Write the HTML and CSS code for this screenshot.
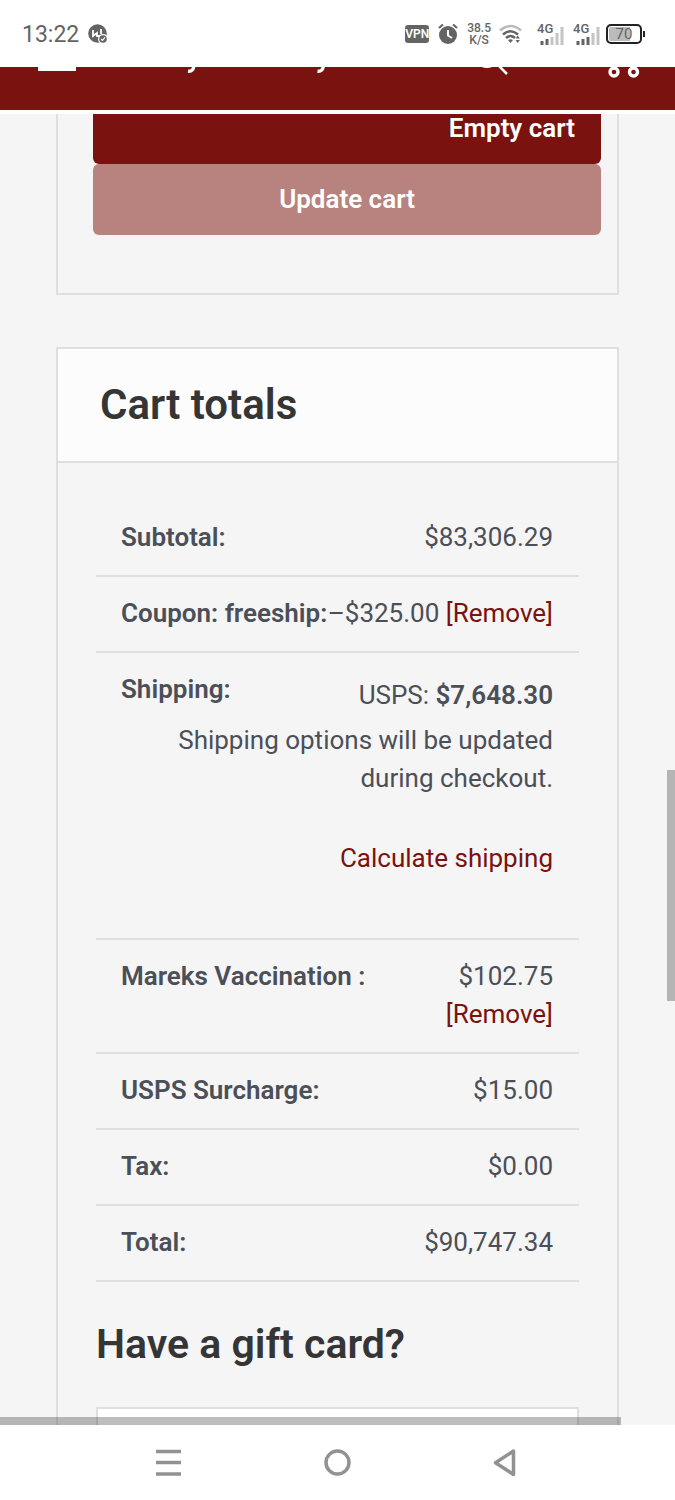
FILE: index.html
```html
<!DOCTYPE html>
<html lang="en">
<head>
<meta charset="utf-8">
<meta name="viewport" content="width=device-width, initial-scale=1">
<title>Cart</title>
<link rel="stylesheet" href="styles.css">
</head>
<body>
<div class="screen">
  <div class="status">
    <div class="status-left">
      <span class="clock">13:22</span>
      <svg width="20" height="20" viewBox="0 0 20 20" aria-hidden="true">
        <circle cx="9.500" cy="9.500" r="9.300" fill="#646464"/>
        <path d="M5 6v6l4-3v3h4M13 5v5" fill="none" stroke="#fff" stroke-width="1.800"/>
        <circle cx="15" cy="15" r="5" fill="#fff"/>
        <circle cx="15" cy="15" r="3.800" fill="#646464"/>
        <path d="M13 15l1.500 1.400 2.500-3" fill="none" stroke="#fff" stroke-width="1.200"/>
      </svg>
    </div>
    <div class="status-right">
      <span class="vpn">VPN</span>
      <svg class="alarm" width="20" height="22" viewBox="0 0 20 22" aria-hidden="true">
        <circle cx="10" cy="12" r="9" fill="#646464"/>
        <path d="M1 5l4-3.500M19 5l-4-3.500" stroke="#646464" stroke-width="2.200" fill="none"/>
        <path d="M10 7v5.500l4 2.500" stroke="#fff" stroke-width="2" fill="none"/>
      </svg>
      <span class="speed">38.5<br>K/S</span>
      <svg class="wifi" width="24" height="20" viewBox="0 0 24 20" aria-hidden="true">
        <g fill="none" stroke-width="2.600">
          <path d="M1 6.500Q11.500-2.500 22 6.500" stroke="#bbb"/>
          <path d="M4 10.500q7.500-6.500 15 0M7 14q4.500-4 9 0" stroke="#646464"/>
        </g>
        <path d="M9 16q2.500-1.500 5 0l-2.500 3zM16.500 14.500l2.200-3 2.200 3zM16.500 16l2.200 3 2.200-3z" fill="#646464"/>
      </svg>
      <div class="signal">
        <span>4G</span>
        <svg width="24" height="19" viewBox="0 0 24 19" aria-hidden="true">
          <path d="M2 19v-4M7 19v-6" stroke="#646464" stroke-width="3"/>
          <path d="M12 19v-8M17 19V7M22 19V1" stroke="#c4c4c4" stroke-width="3"/>
        </svg>
      </div>
      <div class="signal">
        <span>4G</span>
        <svg width="24" height="19" viewBox="0 0 24 19" aria-hidden="true">
          <path d="M2 19v-4M7 19v-6M12 19v-8" stroke="#646464" stroke-width="3"/>
          <path d="M17 19V7M22 19V1" stroke="#c4c4c4" stroke-width="3"/>
        </svg>
      </div>
      <div class="battery"><span>70</span></div>
    </div>
  </div>

  <header class="site-header">
    <button class="menu" type="button" aria-label="Menu"></button>
    <svg class="brand" width="140" height="8" viewBox="0 0 140 8" aria-hidden="true">
      <path d="M7-2C6.500 3 4.500 4.600 1 4.200M136.500-2C136 3 134 4.600 130.500 4.200" fill="none" stroke="#fff" stroke-width="3.400"/>
    </svg>
    <button class="icon-btn search" type="button" aria-label="Search">
      <svg width="30" height="10" viewBox="0 0 30 10">
        <ellipse cx="8" cy="-5" rx="8" ry="5" fill="none" stroke="#fff" stroke-width="2"/>
        <path d="M20-1l8 8" stroke="#fff" stroke-width="2.500"/>
      </svg>
    </button>
    <button class="icon-btn" type="button" aria-label="Cart">
      <svg width="32" height="12" viewBox="0 0 32 12">
        <g fill="none" stroke="#fff" stroke-width="3.400"><circle cx="6" cy="5" r="4"/><circle cx="25.500" cy="5" r="4"/></g>
      </svg>
    </button>
  </header>

  <main class="page">
    <section class="card items">
      <button class="btn empty" type="button">Empty cart</button>
      <button class="btn update" type="button" disabled>Update cart</button>
    </section>

    <section class="card totals">
      <h2 class="card-title">Cart totals</h2>
      <div class="card-body">
        <table class="sums">
          <tbody>
            <tr><th scope="row">Subtotal:</th><td>$83,306.29</td></tr>
            <tr class="coupon"><th scope="row">Coupon: freeship:</th><td>–$325.00 <a href="#">[Remove]</a></td></tr>
            <tr class="shipping">
              <th scope="row">Shipping:</th>
              <td>
                <p>USPS: <strong>$7,648.30</strong></p>
                <p>Shipping options will be updated during checkout.</p>
                <p class="calc"><a href="#">Calculate shipping</a></p>
              </td>
            </tr>
            <tr><th scope="row">Mareks Vaccination :</th><td>$102.75 <a href="#">[Remove]</a></td></tr>
            <tr><th scope="row">USPS Surcharge:</th><td>$15.00</td></tr>
            <tr><th scope="row">Tax:</th><td>$0.00</td></tr>
            <tr><th scope="row">Total:</th><td>$90,747.34</td></tr>
          </tbody>
        </table>
        <h2 class="gift-title"><label for="gift">Have a gift card?</label></h2>
        <input class="gift-input" id="gift" type="text">
      </div>
    </section>
    <div class="scroll-y"></div>
    <div class="scroll-x"></div>
  </main>

  <nav class="sysnav">
    <button type="button" aria-label="Recent apps"><svg width="30" height="30" viewBox="0 0 30 30"><path d="M1 3.500h25M1 14.500h25M1 26h25" stroke="#929292" stroke-width="3.500"/></svg></button>
    <button type="button" aria-label="Home"><svg width="30" height="30" viewBox="0 0 30 30"><circle cx="14.500" cy="14.500" r="11.500" fill="none" stroke="#929292" stroke-width="3.500"/></svg></button>
    <button type="button" aria-label="Back"><svg width="30" height="30" viewBox="0 0 30 30"><path d="M22.500 3v23.500L4.500 14.700z" fill="none" stroke="#929292" stroke-width="3.500" stroke-linejoin="round"/></svg></button>
  </nav>
</div>
</body>
</html>
```
FILE: styles.css
```css
* { box-sizing: border-box; }
body {
  margin: 0;
  font-family: Roboto, "Liberation Sans", sans-serif;
  font-size: 26px;
  line-height: 38px;
  color: #4b4f58;
  background: #f5f5f5;
}
h2, p { margin: 0; }
h2, th, strong { font-weight: 600; }
a { color: #7a120f; text-decoration: none; }
svg { display: block; }
button { border: 0; padding: 0; margin: 0; font: inherit; background: none; }

.screen { display: flex; flex-direction: column; height: 100vh; }

/* phone status bar */
.status {
  flex: none;
  display: flex;
  justify-content: space-between;
  align-items: center;
  height: 67px;
  padding: 0 33px 0 22px;
  background: #fff;
  color: #646464;
}
.status-left, .status-right { display: flex; align-items: center; }
.status-left { gap: 9px; }
.clock { padding-top: 2px; font-size: 23px; }
.vpn {
  width: 24px;
  margin-right: 9px;
  border-radius: 3px;
  background: #646464;
  color: #fff;
  font-size: 12px;
  font-weight: 600;
  line-height: 18px;
  text-align: center;
}
.alarm { margin-right: 9px; }
.speed { font-size: 12px; font-weight: 500; line-height: 12px; text-align: center; margin-right: 8px; }
.wifi { margin-right: 14px; }
.signal { display: grid; width: 27px; margin-right: 9px; }
.signal + .signal { margin-right: 6px; }
.signal > * { grid-area: 1 / 1; }
.signal > svg { align-self: end; justify-self: end; }
.signal > span { font-size: 13px; font-weight: 500; line-height: 14px; padding-bottom: 9px; }
.battery {
  position: relative;
  width: 36px;
  height: 20px;
  border: 2px solid #222;
  border-radius: 5px;
  background: linear-gradient(90deg, #bbb 68%, #fff 68%);
  box-shadow: inset 0 0 0 1px #fff;
  font-size: 15px;
  line-height: 16px;
  text-align: center;
}
.battery::after {
  content: "";
  position: absolute;
  right: -5px;
  top: 5px;
  width: 2px;
  height: 6px;
  background: #222;
}

/* shop header */
.site-header {
  flex: none;
  display: flex;
  align-items: flex-start;
  height: 47px;
  padding: 0 35px 0 38px;
  background: #7a120f;
  border-bottom: 4px solid #fff;
}
.menu { width: 38px; height: 4px; background: #fff; }
.brand { margin-left: 111px; }
.search { margin: 0 auto 0 152px; }

/* cart page */
.page { position: relative; flex: 1; min-height: 0; overflow: hidden; padding: 0 56px; }
.card { border: 2px solid #dfdfdf; }
.items { border-top: 0; padding: 0 16px 58px 35px; }
.btn {
  display: block;
  width: 100%;
  padding: 16px 26px;
  border-radius: 6px;
  background: #7a120f;
  color: #fff;
  font-weight: 600;
}
.empty { padding: 0 26px 22px; border-radius: 0 0 6px 6px; line-height: 28px; text-align: right; }
.update { background: #b8827e; line-height: 39px; }
.totals { margin-top: 52px; }
.card-title {
  padding: 32px 42px;
  border-bottom: 2px solid #dfdfdf;
  background: #fcfcfc;
  color: #353535;
  font-size: 42px;
  line-height: 48px;
}
.card-body { padding: 38px; }
.sums, .sums tbody { display: block; }
.sums tr {
  display: flex;
  justify-content: space-between;
  padding: 17px 26px 19px 25px;
  border-bottom: 2px solid #dfdfdf;
}
.sums th { padding: 0; flex: none; text-align: left; }
.sums td { padding: 0; text-align: right; }
.sums .coupon { white-space: nowrap; }
.sums .shipping { display: grid; }
.shipping > * { grid-area: 1 / 1; }
.shipping > td { display: grid; gap: 7px; padding-top: 6px; padding-bottom: 42px; }
.shipping .calc { padding-top: 35px; }
.gift-title { margin: 38px 0 39px; color: #353535; font-size: 41px; line-height: 48px; }
.gift-input { display: block; width: 100%; height: 76px; border: 2px solid #dfdfdf; background: #fff; font: inherit; }

/* scroll thumbs lie over the page */
.scroll-y, .scroll-x { position: absolute; background: rgba(0, 0, 0, 0.26); }
.scroll-y { right: 0; top: 50%; width: 8px; height: 231px; }
.scroll-x { left: 0; bottom: 0; width: 92%; height: 8px; }

/* system navigation */
.sysnav {
  flex: none;
  display: flex;
  justify-content: center;
  align-items: center;
  gap: 138px;
  height: 75px;
  background: #fff;
}
```
